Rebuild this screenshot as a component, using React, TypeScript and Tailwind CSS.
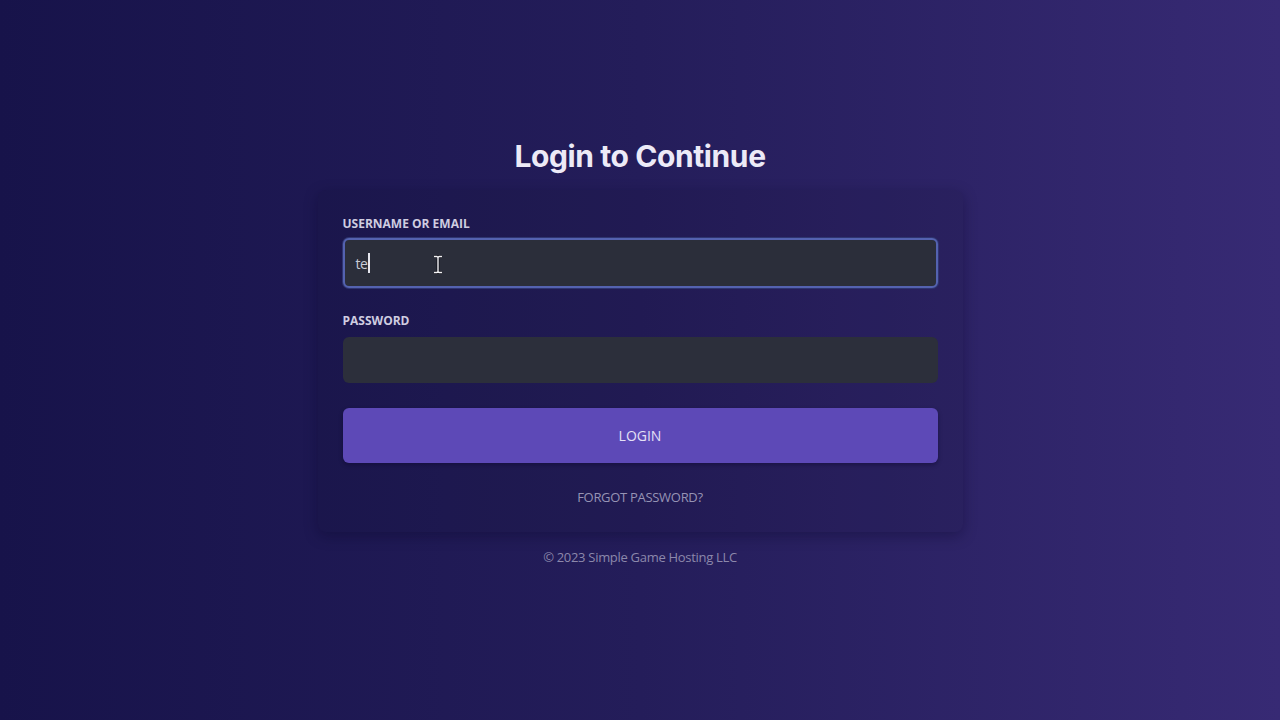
export default function App() {
  return (
    <div
      className="min-h-screen w-full bg-gradient-to-r from-[#17134a] via-[#241d5a] to-[#372a74] flex flex-col items-center pt-[136px]"
      style={{ fontFamily: '"Open Sans", "Noto Sans", sans-serif' }}
    >
      <h1
        className="text-[30px] font-bold text-[#eceaf7] tracking-[-0.4px] leading-[40px]"
        style={{ fontFamily: 'Inter, "Noto Sans", sans-serif' }}
      >
        Login to Continue
      </h1>

      {/* Card */}
      <div className="mt-[14px] w-[645px] rounded-lg bg-black/[0.07] shadow-[0_4px_14px_rgba(10,6,40,0.35)] px-[25px] pt-[25px] pb-[24px]">
        <label className="block text-[12px] font-bold text-[#cfcde0] tracking-[0px] leading-[18px]">
          USERNAME OR EMAIL
        </label>
        <div className="relative mt-[5px] h-[50px] rounded-md bg-[#2b2e3a] border-2 border-[#5462b0] ring-1 ring-[#2f3570] flex items-center px-[11px]">
          <span className="text-[14px] text-[#c9cbd6] tracking-[-0.5px]">te</span>
          <span className="ml-[1px] h-[20px] w-[1.5px] bg-[#e6e6ee]" />
          {/* mouse I-beam */}
          <svg className="absolute left-[88px] top-[15px]" width="10" height="19" viewBox="0 0 10 19">
            <path d="M1 1.5h3l1 1 1-1h3M5 2.5v14M1 17.5h3l1-1 1 1h3" fill="none" stroke="#101018" strokeWidth="3" />
            <path d="M1 1.5h3l1 1 1-1h3M5 2.5v14M1 17.5h3l1-1 1 1h3" fill="none" stroke="#f2f2f5" strokeWidth="1.4" />
          </svg>
        </div>

        <label className="block mt-[24px] text-[12px] font-bold text-[#cfcde0] tracking-[0px] leading-[18px]">
          PASSWORD
        </label>
        <div className="mt-[7px] h-[46px] rounded-md bg-[#2c2f3b]" />

        <button className="mt-[25px] w-full h-[55px] rounded-md bg-[#5d49b7] text-[14px] font-medium text-[#e4e0f6] shadow-[0_2px_4px_rgba(10,6,40,0.4)]">
          LOGIN
        </button>

        <div className="mt-[25px] text-center text-[13px] font-medium text-[#9693b4] tracking-[-0.3px]">
          FORGOT PASSWORD?
        </div>
      </div>

      <div className="mt-[16px] text-[13px] text-[#8c88ab] tracking-[-0.3px]">
        © 2023 Simple Game Hosting LLC
      </div>
    </div>
  );
}
